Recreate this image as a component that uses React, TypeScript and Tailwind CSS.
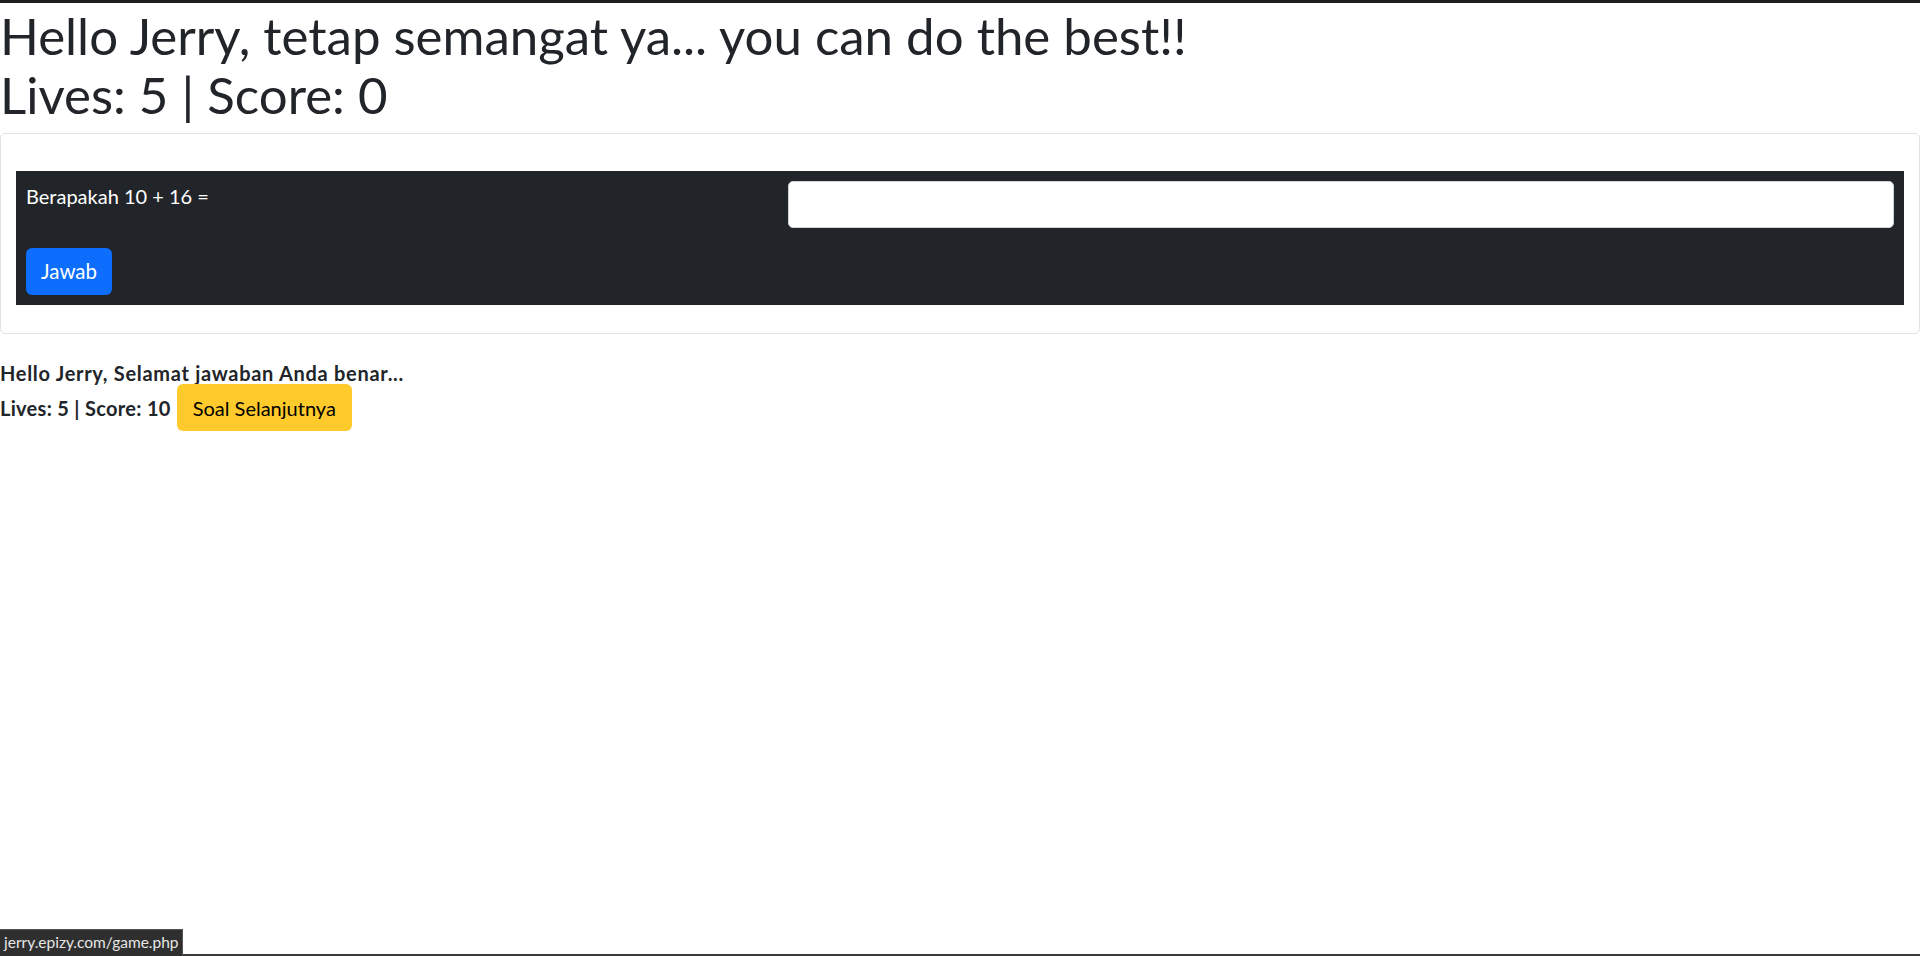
import { useState } from "react";

export default function App() {
    const [answer, setAnswer] = useState("");

    return (
        <div className="min-h-[956px] bg-white font-['Lato','Noto_Sans',sans-serif] text-[#212529]">
            <div className="h-[3px] bg-[#1f1f1f]" />

            <h1 className="mb-[9px] pt-[3px] text-[51px] leading-[59px] font-normal">
                Hello Jerry, tetap semangat ya... you can do the best!!
                <br />
                Lives: 5 | Score: 0
            </h1>

            <div className="rounded-[5px] border border-[#dee2e6] px-[15px] pt-[37px] pb-[28px]">
                <div className="bg-[#212529] px-[10px] pt-[10px] pb-[10px]">
                    <div className="flex">
                        <label className="w-[762px] text-[20px] leading-[30px] text-white">
                            Berapakah 10 + 16 =
                        </label>
                        <input
                            value={answer}
                            onChange={(e) => setAnswer(e.target.value)}
                            className="h-[47px] flex-1 rounded-[5px] border border-[#ced4da] bg-white px-3 text-[20px] outline-none"
                        />
                    </div>
                    <button className="mt-[20px] h-[47px] rounded-[6px] bg-[#0d6efd] px-[15px] text-[20.5px] text-white">
                        Jawab
                    </button>
                </div>
            </div>

            <div className="mt-[24px] text-[20px] leading-[30px] font-bold">
                <div className="tracking-[0.7px]">Hello Jerry, Selamat jawaban Anda benar...</div>
                <div className="-mt-[4px] flex items-center gap-[6px]">
                    <span className="tracking-[0.3px]">Lives: 5 | Score: 10</span>
                    <button className="h-[47px] rounded-[6px] bg-[#ffca2c] px-[16px] text-[20px] font-normal text-black">
                        Soal Selanjutnya
                    </button>
                </div>
            </div>

            {/* browser status bar */}
            <div className="fixed bottom-0 left-0 right-0 h-[2px] bg-[#3a3a3a]" />
            <div className="fixed bottom-0 left-0 flex h-[27px] w-[183px] items-center border-t border-r border-[#555] bg-[#2f2f2f] px-[4px] text-[15.5px] text-[#e6e6e6]">
                jerry.epizy.com/game.php
            </div>
        </div>
    );
}
